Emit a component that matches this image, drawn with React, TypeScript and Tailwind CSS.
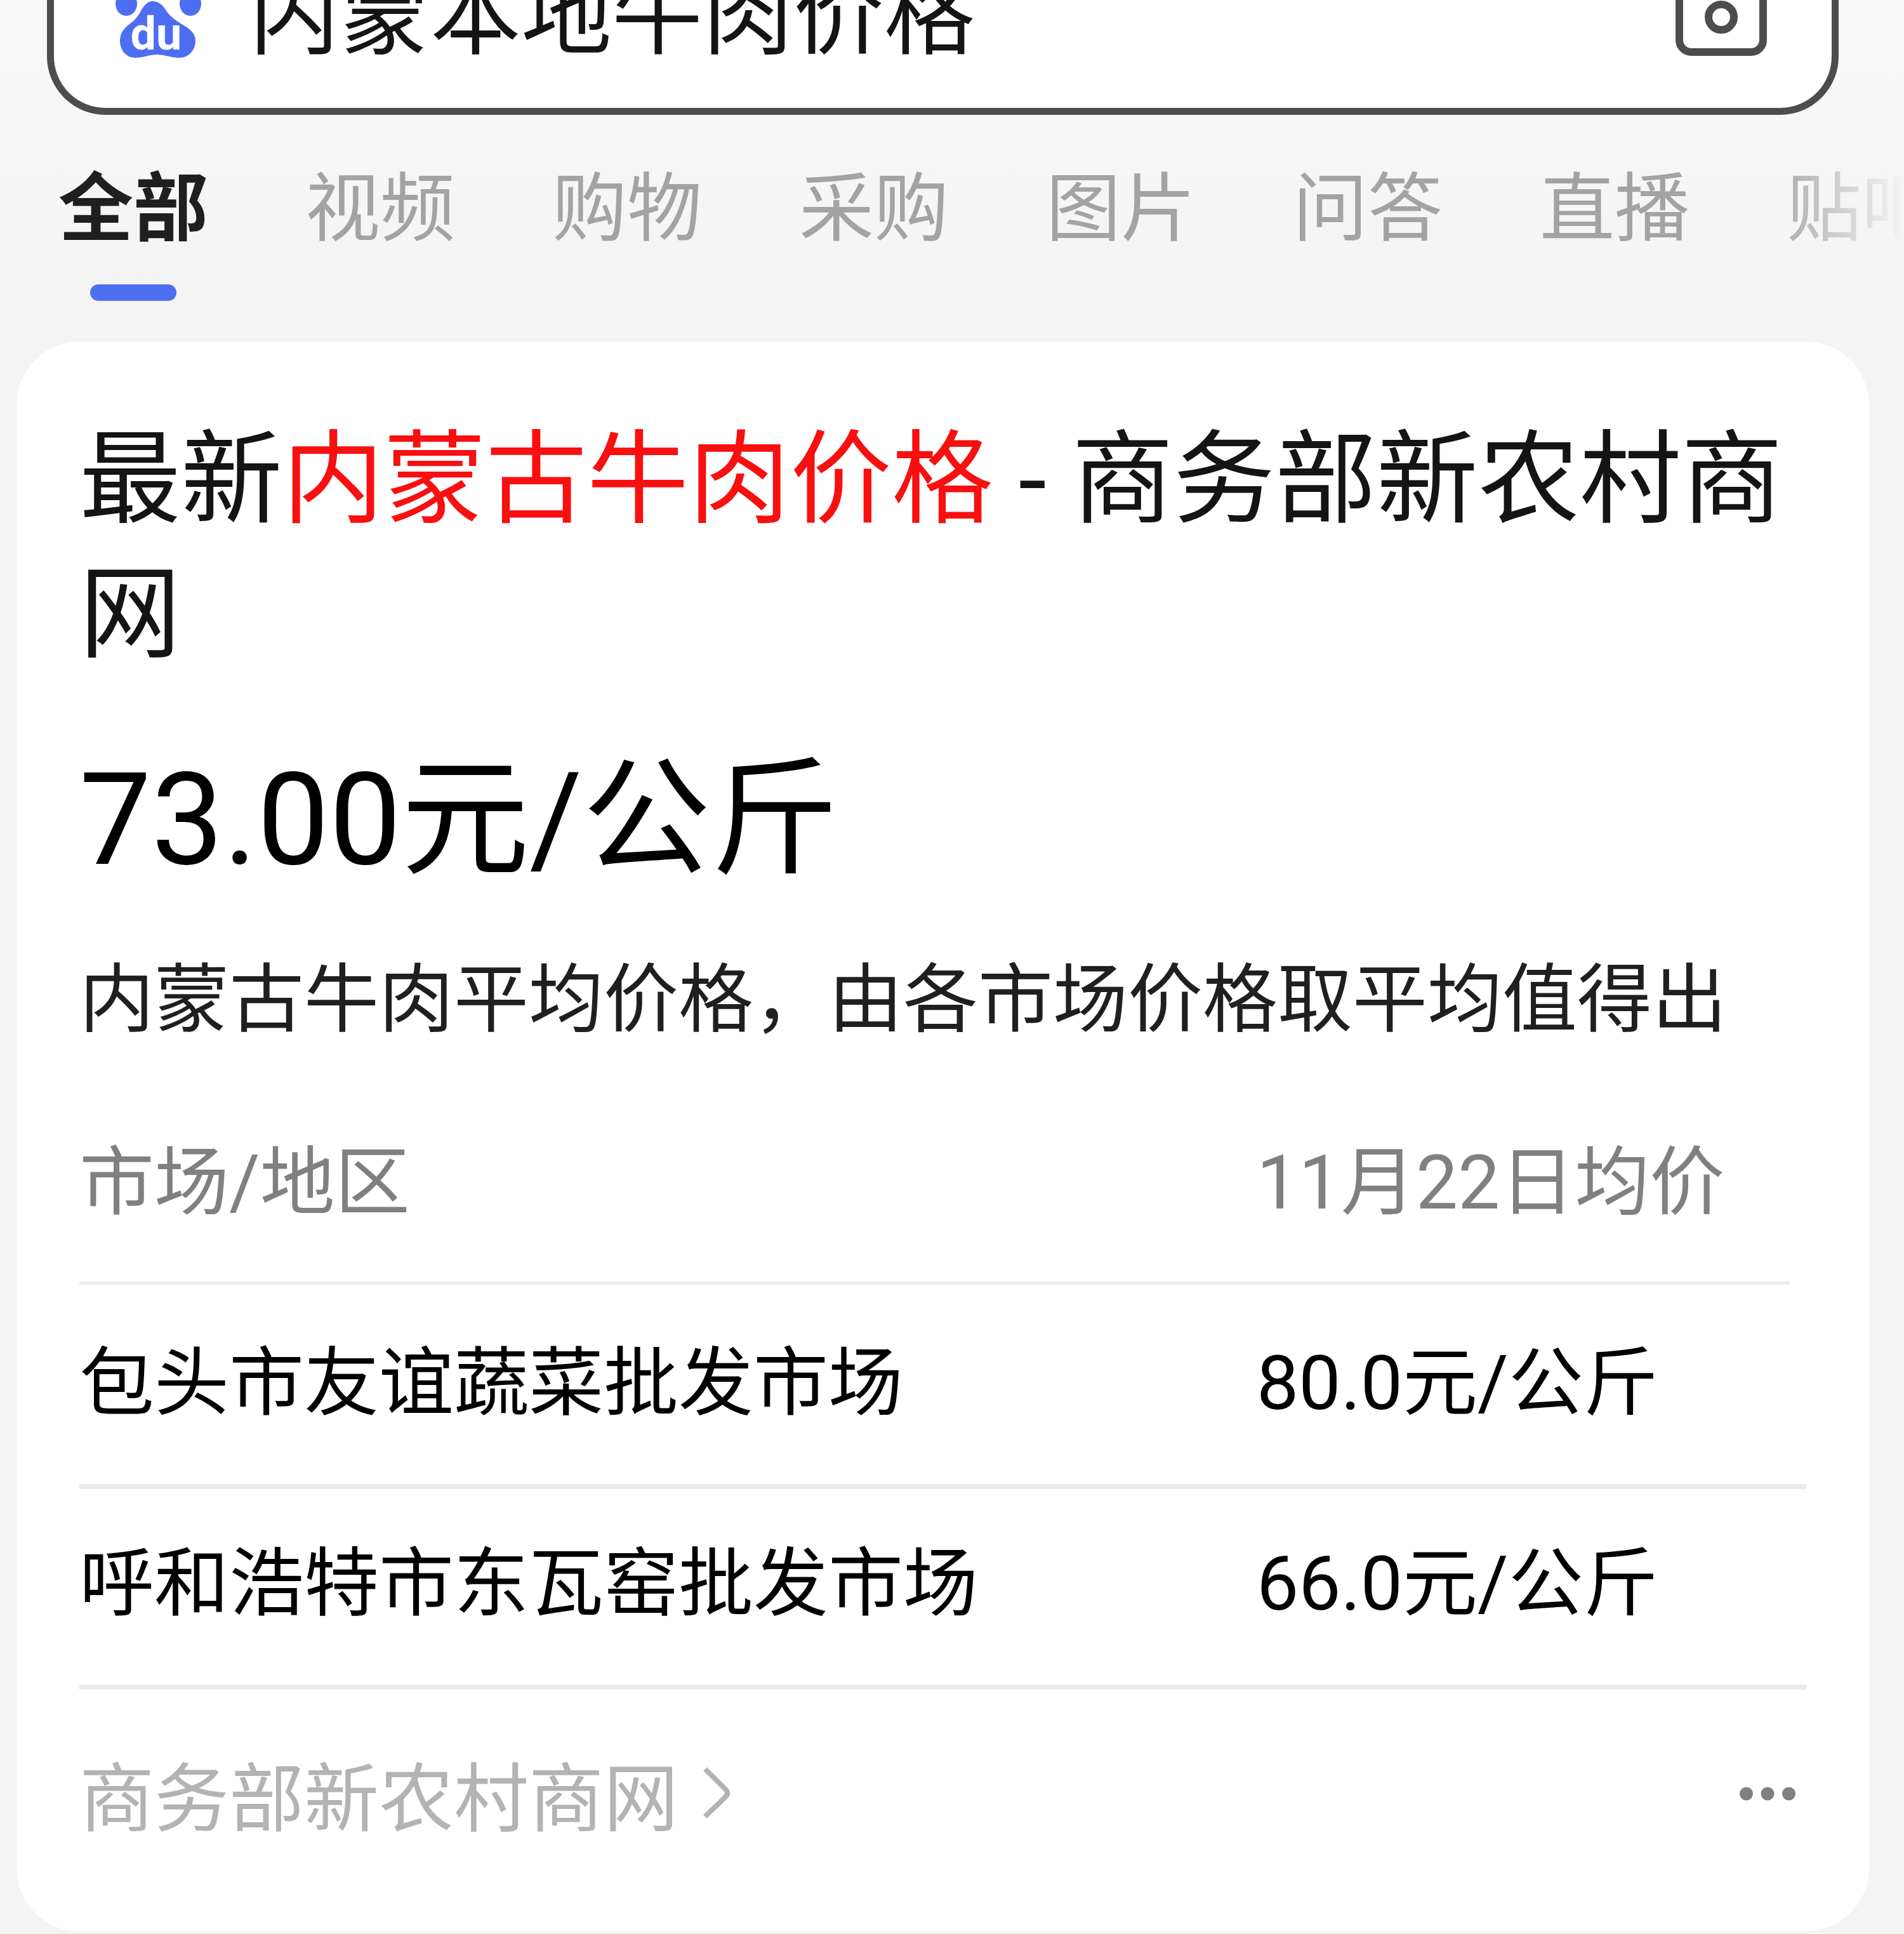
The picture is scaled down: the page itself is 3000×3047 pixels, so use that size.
import React from 'react';

const tabs = ['全部', '视频', '购物', '采购', '图片', '问答', '直播', '贴吧'];

const rows = [
  { market: '包头市友谊蔬菜批发市场', price: '80.0元/公斤' },
  { market: '呼和浩特市东瓦窑批发市场', price: '66.0元/公斤' },
];

const PawLogo: React.FC = () => (
  <svg className="h-[140px] w-[136px] shrink-0" viewBox="0 0 136 140" aria-hidden="true">
    <g fill="#4e6ef2">
      <ellipse cx="17" cy="51" rx="17" ry="19" />
      <ellipse cx="118" cy="51" rx="17" ry="19" />
      <ellipse cx="46" cy="20" rx="17" ry="20" />
      <ellipse cx="90" cy="20" rx="17" ry="20" />
      <path d="M58 47C68 47 75 53 80 62C86 71 96 78 106 84C118 91 126 98 126 109C126 124 115 136 101 136C88 136 78 131 66 131S44 136 31 136C17 136 7 124 7 109C7 97 14 89 22 83C31 76 36 70 40 62C45 53 51 47 58 47Z" />
    </g>
    <text x="64" y="123" fill="#fff" fontSize="72" fontWeight="700" textAnchor="middle" fontFamily="Roboto, sans-serif">
      du
    </text>
  </svg>
);

const CameraIcon: React.FC = () => (
  <svg className="h-[126px] w-[144px]" viewBox="0 0 144 126" fill="none" stroke="#4d4d4d" strokeWidth="12" aria-hidden="true">
    <rect x="6" y="6" width="132" height="114" rx="19" />
    <circle cx="72" cy="65" r="20" />
  </svg>
);

const SearchBar: React.FC = () => (
  <form className="-mt-[131px] mr-[103px] ml-[74px] flex h-[312px] items-center rounded-[92px] border-[11px] border-[#4d4d4d] bg-white pr-[102px] pl-[97px]">
    <PawLogo />
    <input
      type="text"
      aria-label="搜索"
      defaultValue="内蒙本地牛肉价格"
      className="ml-[74px] h-[200px] min-w-0 flex-1 bg-transparent text-[143px] text-[#141414] outline-none"
    />
    <button type="button" aria-label="拍照搜索" className="shrink-0">
      <CameraIcon />
    </button>
  </form>
);

const Tabs: React.FC = () => (
  <nav className="flex gap-[153px] overflow-hidden pt-[79px] pb-16 pl-[92px] text-[118px] leading-[140px] [mask-image:linear-gradient(to_right,black_calc(100%-220px),transparent)]">
    {tabs.map((tab, i) => (
      <a key={tab} href="#" className="flex shrink-0 flex-col items-center gap-12 whitespace-nowrap">
        <span className={i === 0 ? 'font-bold text-[#1f1f1f]' : 'text-[#a3a3a3]'}>{tab}</span>
        {i === 0 && <span className="h-[26px] w-[136px] rounded-full bg-[#4e6ef2]" />}
      </a>
    ))}
  </nav>
);

const PriceTable: React.FC = () => (
  <table className="mt-32 w-full table-fixed border-separate border-spacing-0 text-left text-[118px] leading-[160px] text-black">
    <colgroup>
      <col />
      <col className="w-[840px]" />
      <col className="w-[26px]" />
    </colgroup>
    <thead>
      <tr className="text-[#808080]">
        <th className="border-b-5 border-[#ebebeb] p-0 pb-[75px] font-normal">市场/地区</th>
        <th className="border-b-5 border-[#ebebeb] p-0 pb-[75px] font-normal">11月22日均价</th>
        <td />
      </tr>
    </thead>
    <tbody>
      {rows.map((row) => (
        <tr key={row.market} className="group">
          <td className="border-b-8 border-[#ebebeb] p-0 pt-[70px] pb-[78px] group-first:pt-[76px]">{row.market}</td>
          <td colSpan={2} className="border-b-8 border-[#ebebeb] p-0 pt-[70px] pb-[78px] group-first:pt-[76px]">
            {row.price}
          </td>
        </tr>
      ))}
    </tbody>
  </table>
);

const ResultCard: React.FC = () => (
  <article className="mr-[55px] ml-[26px] rounded-[100px] bg-white px-[99px] pt-[113px] pb-[127px]">
    <h2 className="text-[160px] leading-[212px] text-[#141414]">
      <a href="#">
        最新<em className="text-[#f80f10] not-italic">内蒙古牛肉价格</em> - 商务部新农村商网
      </a>
    </h2>
    <p className="mt-[97px] text-[202px] leading-[240px] text-black">73.00元/公斤</p>
    <p className="mt-[84px] text-[118px] leading-[160px] text-[#1f1f1f]">内蒙古牛肉平均价格，由各市场价格取平均值得出</p>

    <PriceTable />

    <div className="mt-[94px] flex items-start justify-between pr-[17px]">
      <a href="#" className="flex items-start text-[118px] leading-[160px] text-[#b3b3b3]">
        商务部新农村商网
        <svg className="ml-9 h-[136px] w-12" viewBox="0 0 48 136" fill="none" stroke="currentColor" strokeWidth="8" aria-hidden="true">
          <path d="M6 31L38 63q6 6 0 12L6 106" />
        </svg>
      </a>
      <button type="button" aria-label="更多">
        <svg className="h-[140px] w-[88px]" viewBox="0 0 88 140" fill="#808080" aria-hidden="true">
          <circle cx="10.5" cy="70" r="10.5" />
          <circle cx="44" cy="70" r="10.5" />
          <circle cx="77.5" cy="70" r="10.5" />
        </svg>
      </button>
    </div>
  </article>
);

export default function App() {
  return (
    <div
      lang="zh-CN"
      className="flow-root min-h-screen overflow-hidden bg-[#f4f4f4] bg-[linear-gradient(to_bottom,#f9f9f9,#f4f4f4_450px)] font-[Roboto,'Noto_Sans_CJK_SC',sans-serif]"
    >
      <SearchBar />
      <Tabs />
      <ResultCard />
    </div>
  );
}
